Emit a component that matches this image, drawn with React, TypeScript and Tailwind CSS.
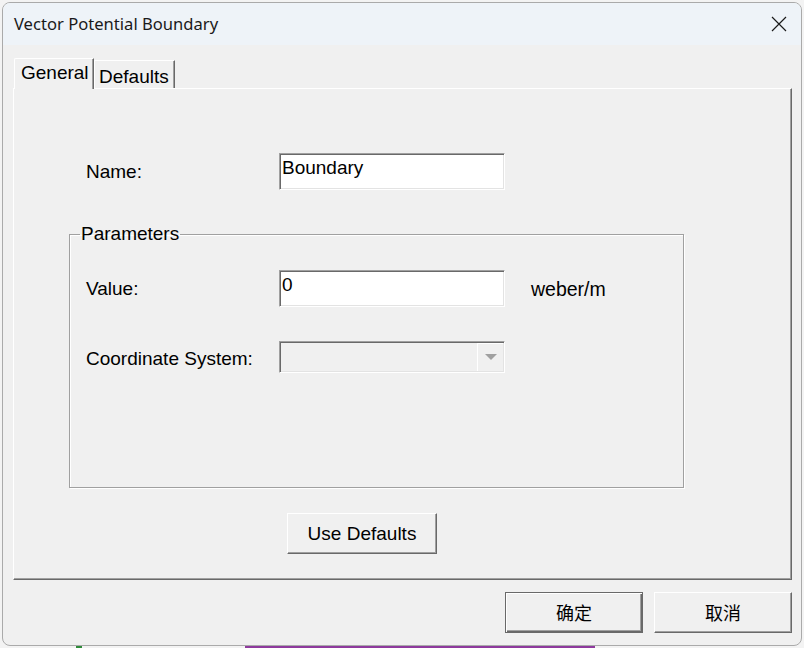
import React from 'react';

function Field({ value }: { value: string }) {
  return (
    <div className="w-[226px] h-[37px] bg-white border border-t-[#a0a0a0] border-l-[#a0a0a0] border-b-white border-r-white shadow-[inset_1px_1px_0_#696969,inset_-1px_-1px_0_#e3e3e3] pl-[2px] pt-[3px] text-[19px] leading-[22px] text-black">
      {value}
    </div>
  );
}

function Combo() {
  return (
    <div className="w-[226px] h-[32px] bg-[#f0f0f0] border border-t-[#a0a0a0] border-l-[#a0a0a0] border-b-white border-r-white shadow-[inset_1px_1px_0_#696969,inset_-1px_-1px_0_#e3e3e3] flex justify-end p-[1px]">
      <div className="w-[26px] h-full border-l border-t border-white flex items-center justify-center">
        <svg width="12" height="7" viewBox="0 0 12 7">
          <path d="M0 0 L12 0 L6 6 Z" fill="#a0a0a0" />
        </svg>
      </div>
    </div>
  );
}

function App() {
  return (
    <div className="w-[804px] h-[648px] bg-[#f3f3f3] pt-[2px] px-[2px] font-['Liberation_Sans',Arial,sans-serif] text-black">
      <div className="w-[800px] h-[644px] rounded-[8px] border border-[#aaaaaa] overflow-hidden flex flex-col bg-[#f0f0f0]">
        {/* title bar */}
        <div className="h-[42px] bg-[#eef3f8] flex items-center justify-between pl-[11px] pr-[14px]">
          <span className="text-[16.6px] font-['Noto_Sans',sans-serif] text-[#1a1a1a]">Vector Potential Boundary</span>
          <svg width="16" height="16" viewBox="0 0 16 16">
            <path d="M1 1 L15 15 M15 1 L1 15" stroke="#1a1a1a" strokeWidth="1.2" />
          </svg>
        </div>

        <div className="flex-1 pl-[10px] pr-[9px] pt-[13px] flex flex-col">
          {/* tabs */}
          <div className="flex items-end pl-[1px]">
            <div className="relative z-10 -mb-px w-[80px] h-[31px] bg-[#f0f0f0] border-l border-t border-white border-r border-r-[#696969] shadow-[inset_-1px_0_0_#a0a0a0] rounded-tl-[2px] pl-[6px] pt-[3px] text-[19px] leading-[22px]">
              General
            </div>
            <div className="w-[81px] h-[28px] border-l border-t border-white border-r border-r-[#696969] shadow-[inset_-1px_0_0_#a0a0a0] pl-[4px] pt-[5px] text-[19px] leading-[22px]">
              Defaults
            </div>
          </div>

          {/* tab panel */}
          <div className="h-[492px] border border-t-white border-l-white border-r-[#696969] border-b-[#696969] shadow-[inset_-1px_-1px_0_#a0a0a0] text-[19px] leading-[22px]">
            <div className="mt-[64px] pl-[72px] flex items-center">
              <div className="w-[193px]">Name:</div>
              <Field value="Boundary" />
            </div>

            <fieldset className="mt-[33px] ml-[55px] w-[615px] border border-[#a0a0a0] shadow-[1px_1px_0_#fff,inset_1px_1px_0_#fff]">
              <legend className="ml-[10px] px-[1px]">Parameters</legend>
              <div className="h-[242px] pt-[25px] pl-[16px]">
                <div className="flex items-center">
                  <div className="w-[193px]">Value:</div>
                  <Field value="0" />
                  <div className="ml-[26px] text-[19.5px]">weber/m</div>
                </div>
                <div className="mt-[34px] flex items-center">
                  <div className="w-[193px] pt-[3px]">Coordinate System:</div>
                  <Combo />
                </div>
              </div>
            </fieldset>

            <button className="mt-[25px] ml-[273px] w-[150px] h-[41px] border border-t-white border-l-white border-r-[#696969] border-b-[#696969] shadow-[inset_-1px_-1px_0_#a0a0a0] bg-[#f0f0f0] text-[19px]">
              Use Defaults
            </button>
          </div>

          {/* dialog buttons */}
          <div className="mt-[12px] flex justify-end gap-[11px] text-[18px] font-['Noto_Sans_CJK_SC',sans-serif]">
            <button className="w-[138px] h-[41px] border border-[#696969] shadow-[inset_1px_1px_0_#fff,inset_-1px_-1px_0_#696969,inset_-2px_-2px_0_#a0a0a0] bg-[#f0f0f0]">
              确定
            </button>
            <button className="w-[138px] h-[41px] border border-t-white border-l-white border-r-[#696969] border-b-[#696969] shadow-[inset_-1px_-1px_0_#a0a0a0] bg-[#f0f0f0]">
              取消
            </button>
          </div>
        </div>
      </div>
      <div className="h-[2px] flex">
        <div className="ml-[74px] w-[6px] bg-[#2e8b3a]" />
        <div className="ml-[163px] w-[350px] bg-[#8e3a9d]" />
      </div>
    </div>
  );
}

export default App;
